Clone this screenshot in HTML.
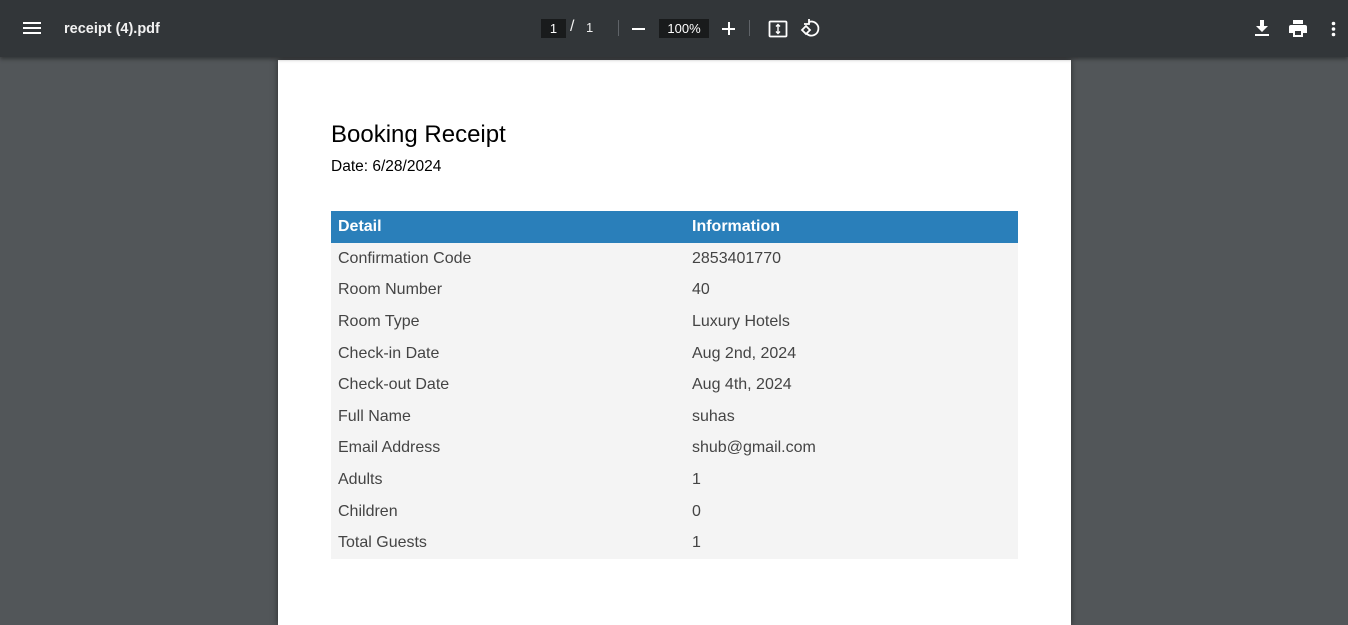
<!DOCTYPE html>
<html><head><style>
*{margin:0;padding:0;box-sizing:border-box}
html,body{width:1348px;height:625px;overflow:hidden}
body{background:#525659;font-family:"Liberation Sans",sans-serif;position:relative}
.tb{position:absolute;left:0;top:0;width:1348px;height:57px;background:#323639;box-shadow:0 2px 4px rgba(0,0,0,.4);z-index:2;color:#f1f1f1}
.tb .t{position:absolute;left:64px;top:21px;font-size:14.5px;font-weight:bold}
.box{position:absolute;background:#191b1c;color:#fff;font-size:13px;text-align:center;line-height:19px;top:19px;height:19px}
.sep{position:absolute;top:20px;width:1px;height:16px;background:#5f6368}
.page{position:absolute;left:278px;top:60px;width:793px;height:565px;background:#fff;box-shadow:0 0 6px rgba(0,0,0,.5)}
h1{position:absolute;left:53px;top:61px;font-size:24px;font-weight:normal;color:#000}
.d{position:absolute;left:53px;top:98px;font-size:15.5px;color:#000}
table{position:absolute;left:53px;top:151px;width:687px;border-collapse:collapse;font-size:16px}
th{background:#2a7fba;color:#fff;text-align:left;height:32px;padding-left:7px;font-weight:bold}
td{background:#f4f4f4;color:#444;height:31.6px;padding-left:7px}
</style></head><body>
<div class="tb">
<svg style="position:absolute;left:23px;top:21px" width="18" height="14"><rect y="1" width="18" height="2" fill="#fff"/><rect y="6" width="18" height="2" fill="#fff"/><rect y="11" width="18" height="2" fill="#fff"/></svg>
<div class="t">receipt (4).pdf</div>
<div class="box" style="left:541px;width:25px">1</div>
<div style="position:absolute;left:570px;top:18px;font-size:16px">/</div>
<div style="position:absolute;left:586px;top:20px;font-size:13px">1</div>
<div class="sep" style="left:618px"></div>
<div style="position:absolute;left:632px;top:28px;width:13px;height:2px;background:#fff"></div>
<div class="box" style="left:659px;width:50px">100%</div>
<div style="position:absolute;left:722px;top:28px;width:13px;height:2px;background:#fff"></div>
<div style="position:absolute;left:727.5px;top:22px;width:2px;height:13px;background:#fff"></div>
<div class="sep" style="left:749px"></div>
<svg style="position:absolute;left:768px;top:19px" width="20" height="20" viewBox="0 0 20 20" fill="none" stroke="#fff" stroke-width="1.8"><rect x="1.5" y="2.5" width="17" height="15" rx="1"/><path d="M10 6v8M8 7.5l2-2 2 2M8 12.5l2 2 2-2" stroke-width="1.4"/></svg>
<svg style="position:absolute;left:800px;top:18px" width="20" height="20" viewBox="0 0 20 20" fill="none" stroke="#fff" stroke-width="1.8"><path d="M9 4a7 7 0 1 1-2 12"/><path d="M9 1v5H4" /><path d="M2 12l4-4 4 4-4 4z"/></svg>
<svg style="position:absolute;left:1255px;top:20px" width="14" height="17" viewBox="0 0 14 17" fill="#fff"><path d="M5 0h4v6h4l-6 6-6-6h4z"/><rect y="14" width="14" height="2"/></svg>
<svg style="position:absolute;left:1289px;top:20px" width="18" height="17" viewBox="0 0 18 17" fill="#fff"><rect x="4" y="0" width="10" height="4"/><path d="M2 5h14a2 2 0 0 1 2 2v6h-4v4H4v-4H0V7a2 2 0 0 1 2-2z"/><rect x="6" y="11" width="6" height="4" fill="#323639"/></svg>
<svg style="position:absolute;left:1331px;top:21px" width="5" height="16" fill="#fff"><circle cx="2.5" cy="2.5" r="1.8"/><circle cx="2.5" cy="8" r="1.8"/><circle cx="2.5" cy="13.5" r="1.8"/></svg>
</div>
<div class="page">
<h1>Booking Receipt</h1>
<div class="d">Date: 6/28/2024</div>
<table>
<tr><th style="width:354px">Detail</th><th>Information</th></tr>
<tr><td>Confirmation Code</td><td>2853401770</td></tr>
<tr><td>Room Number</td><td>40</td></tr>
<tr><td>Room Type</td><td>Luxury Hotels</td></tr>
<tr><td>Check-in Date</td><td>Aug 2nd, 2024</td></tr>
<tr><td>Check-out Date</td><td>Aug 4th, 2024</td></tr>
<tr><td>Full Name</td><td>suhas</td></tr>
<tr><td>Email Address</td><td>shub@gmail.com</td></tr>
<tr><td>Adults</td><td>1</td></tr>
<tr><td>Children</td><td>0</td></tr>
<tr><td>Total Guests</td><td>1</td></tr>
</table>
</div>
</body></html>
